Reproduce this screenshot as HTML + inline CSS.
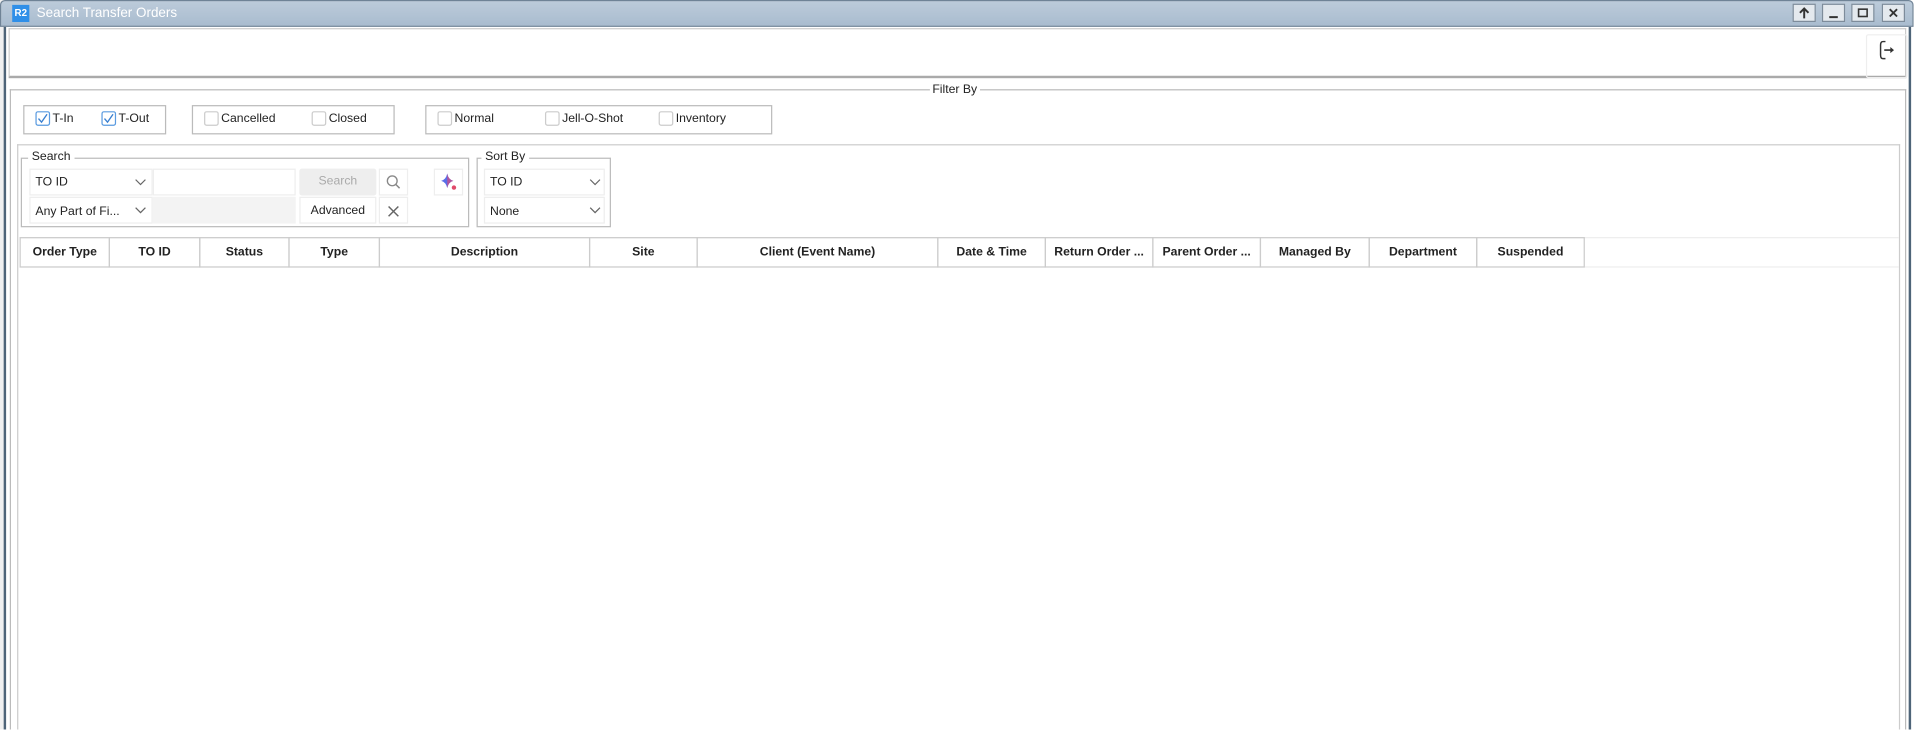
<!DOCTYPE html>
<html><head><meta charset="utf-8"><style>
*{box-sizing:border-box;margin:0;padding:0}
html,body{width:1916px;height:729px;overflow:hidden;background:#fff}
#s{position:absolute;left:0;top:0;width:1568px;height:597px;overflow:hidden;transform:scale(1.22194);transform-origin:0 0;font-family:"Liberation Sans",sans-serif;font-size:10px;color:#222}
.a{position:absolute}
.tb{left:0;top:0;width:1566px;height:22px;background:linear-gradient(#bccbda,#a9bccf);border:1px solid #6f8396;border-radius:4px 4px 0 0}
.wb{top:3px;width:19px;height:15px;background:#e4e9ee;border:1px solid #7d8c9b}
.box{border:1px solid #bbb}
.cb{width:12px;height:12px;border:1px solid #ccc;border-radius:2px;background:#fff}
.cb.on{border-color:#5a9be0}
.th{top:194px;height:25px;border:1px solid #ccc;font-weight:bold;font-size:10px;text-align:center;line-height:23px;white-space:nowrap;overflow:hidden}
.fld{border:1px solid #eee;background:#fff}
</style></head><body><div id="s">
<div class="a" style="left:0;top:0;width:3px;height:597px;background:#f0f0f0"></div>
<div class="a" style="left:3px;top:22px;width:2px;height:575px;background:#4e6478"></div>
<div class="a" style="left:1562px;top:22px;width:2px;height:575px;background:#4e6478"></div>
<div class="a tb"></div>
<div class="a" style="left:10px;top:4px;width:14px;height:14px;background:#2f8fe8;color:#fff;font-size:8px;font-weight:bold;line-height:13px;text-align:center">R2</div>
<div class="a" style="left:30px;top:5px;color:#fff;font-size:11px">Search Transfer Orders</div>
<div class="a wb" style="left:1467px"><svg width="17" height="13"><path d="M8.5 3V11M5 6.5L8.5 3L12 6.5" fill="none" stroke="#333" stroke-width="1.6"/></svg></div>
<div class="a wb" style="left:1491px"><svg width="17" height="13"><path d="M5 10H12" stroke="#333" stroke-width="1.6"/></svg></div>
<div class="a wb" style="left:1515px"><svg width="17" height="13"><rect x="5" y="3.5" width="7" height="6" fill="none" stroke="#333" stroke-width="1.3"/></svg></div>
<div class="a wb" style="left:1540px"><svg width="17" height="13"><path d="M5.5 3.5L11.5 9.5M11.5 3.5L5.5 9.5" stroke="#333" stroke-width="1.5"/></svg></div>
<div class="a" style="left:7px;top:23px;width:1553px;height:41px;border:1px solid #ccc;border-bottom:2px solid #aaa"></div>
<div class="a" style="left:1527px;top:28px;width:34px;height:36px;border:1px solid #eee;border-radius:2px"></div>
<svg class="a" style="left:1535px;top:31px" width="18" height="20" viewBox="0 0 18 20"><path d="M8 3H6Q4 3 4 6V14Q4 17 6 17H8" fill="none" stroke="#333" stroke-width="1.2"/><path d="M7 10H13" stroke="#333" stroke-width="1.3"/><path d="M12 7.5L15 10L12 12.5Z" fill="#333"/></svg>
<div class="a" style="left:8px;top:73px;width:1552px;height:525px;border:1px solid #bbb;border-bottom:none"></div>
<div class="a" style="left:761px;top:68px;background:#fff;padding:0 2px">Filter By</div>
<div class="a box" style="left:19px;top:86px;width:117px;height:24px"></div>
<div class="a cb on" style="left:29px;top:91px"><svg width="10" height="10"><path d="M1.5 5L4 8L8.5 1.5" fill="none" stroke="#3a80d0" stroke-width="1.1"/></svg></div><div class="a" style="left:43px;top:92px">T-In</div>
<div class="a cb on" style="left:83px;top:91px"><svg width="10" height="10"><path d="M1.5 5L4 8L8.5 1.5" fill="none" stroke="#3a80d0" stroke-width="1.1"/></svg></div><div class="a" style="left:97px;top:92px">T-Out</div>
<div class="a box" style="left:157px;top:86px;width:166px;height:24px"></div>
<div class="a cb" style="left:167px;top:91px"></div><div class="a" style="left:181px;top:92px">Cancelled</div>
<div class="a cb" style="left:255px;top:91px"></div><div class="a" style="left:269px;top:92px">Closed</div>
<div class="a box" style="left:348px;top:86px;width:284px;height:24px"></div>
<div class="a cb" style="left:358px;top:91px"></div><div class="a" style="left:372px;top:92px">Normal</div>
<div class="a cb" style="left:446px;top:91px"></div><div class="a" style="left:460px;top:92px">Jell-O-Shot</div>
<div class="a cb" style="left:539px;top:91px"></div><div class="a" style="left:553px;top:92px">Inventory</div>
<div class="a" style="left:14px;top:118px;width:1541px;height:480px;border:1px solid #ccc;border-bottom:none"></div>
<div class="a" style="left:17px;top:129px;width:367px;height:57px;border:1px solid #bbb"></div>
<div class="a" style="left:23px;top:123px;background:#fff;padding:0 3px">Search</div>
<div class="a fld" style="left:24px;top:138px;width:101px;height:22px"></div>
<div class="a" style="left:29px;top:144px">TO ID</div>
<svg class="a" style="left:110px;top:146px" width="10" height="6"><path d="M1 1L5 5L9 1" fill="none" stroke="#666"/></svg>
<div class="a fld" style="left:125px;top:138px;width:117px;height:22px"></div>
<div class="a" style="left:245px;top:138px;width:63px;height:22px;background:#eee;color:#aaa;text-align:center;line-height:22px;border-radius:2px">Search</div>
<div class="a fld" style="left:310px;top:138px;width:24px;height:22px"></div>
<svg class="a" style="left:315px;top:142px" width="14" height="14"><circle cx="6" cy="6" r="4" fill="none" stroke="#888" stroke-width="1.1"/><path d="M9 9L12 12" stroke="#888" stroke-width="1.2"/></svg>
<div class="a fld" style="left:355px;top:138px;width:24px;height:22px"></div>
<svg class="a" style="left:359px;top:141px" width="16" height="16"><path d="M7 1Q8 6 12 7Q8 8 7 13Q6 8 2 7Q6 6 7 1Z" fill="#5a6ee8"/><path d="M7 1Q8 6 12 7Q8 8 7 13Z" fill="#d84a7a" opacity=".7"/><circle cx="12.5" cy="12.5" r="1.8" fill="#e04a6a"/></svg>
<div class="a fld" style="left:24px;top:161px;width:101px;height:22px"></div>
<div class="a" style="left:29px;top:168px">Any Part of Fi...</div>
<svg class="a" style="left:110px;top:169px" width="10" height="6"><path d="M1 1L5 5L9 1" fill="none" stroke="#666"/></svg>
<div class="a" style="left:125px;top:161px;width:117px;height:22px;background:#f3f3f3"></div>
<div class="a fld" style="left:245px;top:161px;width:63px;height:22px;text-align:center;line-height:22px;color:#222">Advanced</div>
<div class="a fld" style="left:310px;top:161px;width:24px;height:22px"></div>
<svg class="a" style="left:316px;top:167px" width="12" height="12"><path d="M2 2L10 10M10 2L2 10" stroke="#666" stroke-width="1.2"/></svg>
<div class="a" style="left:390px;top:129px;width:110px;height:57px;border:1px solid #bbb"></div>
<div class="a" style="left:394px;top:123px;background:#fff;padding:0 3px">Sort By</div>
<div class="a fld" style="left:396px;top:138px;width:99px;height:22px"></div>
<div class="a" style="left:401px;top:144px">TO ID</div>
<svg class="a" style="left:482px;top:146px" width="10" height="6"><path d="M1 1L5 5L9 1" fill="none" stroke="#666"/></svg>
<div class="a fld" style="left:396px;top:161px;width:99px;height:22px"></div>
<div class="a" style="left:401px;top:168px">None</div>
<svg class="a" style="left:482px;top:169px" width="10" height="6"><path d="M1 1L5 5L9 1" fill="none" stroke="#666"/></svg>
<div class="a" style="left:16px;top:194px;width:1538px;height:25px;border-top:1px solid #eee;border-bottom:1px solid #eee"></div>
<div class="a th" style="left:16px;width:74px">Order Type</div>
<div class="a th" style="left:89px;width:75px">TO ID</div>
<div class="a th" style="left:163px;width:74px">Status</div>
<div class="a th" style="left:236px;width:75px">Type</div>
<div class="a th" style="left:310px;width:173px">Description</div>
<div class="a th" style="left:482px;width:89px">Site</div>
<div class="a th" style="left:570px;width:198px">Client (Event Name)</div>
<div class="a th" style="left:767px;width:89px">Date &amp; Time</div>
<div class="a th" style="left:855px;width:89px">Return Order ...</div>
<div class="a th" style="left:943px;width:89px">Parent Order ...</div>
<div class="a th" style="left:1031px;width:90px">Managed By</div>
<div class="a th" style="left:1120px;width:89px">Department</div>
<div class="a th" style="left:1208px;width:89px">Suspended</div>
</div></body></html>
